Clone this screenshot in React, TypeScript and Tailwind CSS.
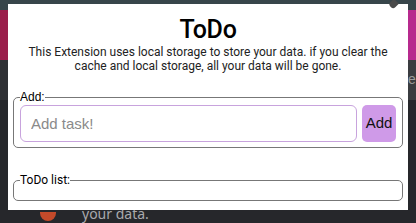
import React, { useState } from 'react';

const App: React.FC = () => {
  const [task, setTask] = useState('');

  return (
    <div className="relative w-[416px] h-[223px] overflow-hidden bg-[#26272b]">
      {/* page behind the popup */}
      <div className="flex flex-col h-full">
        <div className="h-[10px] bg-[#37454a]" />
        <div className="flex h-[50px]">
          <div className="w-[8px] bg-[#9a1f4b]" />
          <div className="flex-1 bg-[#b52679]" />
          <div className="w-[8px] bg-[#b72a8e]" />
        </div>
        <div className="flex h-[40px]">
          <div className="w-[8px] bg-[#2e3034]" />
          <div className="flex-1" />
          <div className="w-[8px] bg-[#3a3c40] overflow-hidden text-[14px] text-[#9a9a9a] leading-none pt-[12px] font-['Liberation_Sans',sans-serif]">e</div>
        </div>
        <div className="flex-1 flex items-end pl-[40px] pb-[2px] gap-[26px]">
          <div className="w-[16px] h-[9px] rounded-b-full bg-[#c44a2a]" />
          <span className="text-[14px] leading-none text-[#a9a9ad] font-['Noto_Sans','Liberation_Sans',sans-serif]">your data.</span>
        </div>
      </div>

      {/* extension popup */}
      <div className="absolute left-[8px] top-[4px] w-[400px] h-[206px] bg-white px-[5px] font-['Roboto',sans-serif] text-black">
        <h1 className="mt-[11px] text-center text-[25px] leading-[30px] font-medium tracking-[-0.3px]">ToDo</h1>
        <p className="text-center text-[12px] leading-[14px] text-[#222] px-[8px]">
          This Extension uses local storage to store your data. if you clear the cache and local storage, all your data will be gone.
        </p>

        <fieldset className="mt-[18px] border-[1.5px] border-[#777] rounded-[5px] px-[6px] pb-[5px] pt-[2px] font-['Liberation_Sans',sans-serif]">
          <legend className="text-[12px] leading-[12px] px-0">Add:</legend>
          <div className="flex gap-[5px]">
            <input
              value={task}
              onChange={(e) => setTask(e.target.value)}
              placeholder="Add task!"
              className="flex-1 h-[37px] border border-[#c8a3dd] rounded-[6px] px-[10px] text-[15px] placeholder:text-[#8a8a8a] outline-none"
            />
            <button className="w-[34px] h-[37px] rounded-[5px] bg-[#cf9ae8] text-[15px] text-[#111]">Add</button>
          </div>
        </fieldset>

        <fieldset className="mt-[26px] h-[27px] border-[1.5px] border-[#777] rounded-[5px] px-[6px] font-['Roboto',sans-serif]">
          <legend className="text-[12px] leading-[12px]">ToDo list:</legend>
        </fieldset>
      </div>

      {/* cursor-ish dark shape at top right */}
      <div className="absolute left-[390px] top-0 w-[7px] h-[8px] bg-[#4a4a4a] rounded-b-[3px] rotate-45" />
    </div>
  );
};

export default App;
